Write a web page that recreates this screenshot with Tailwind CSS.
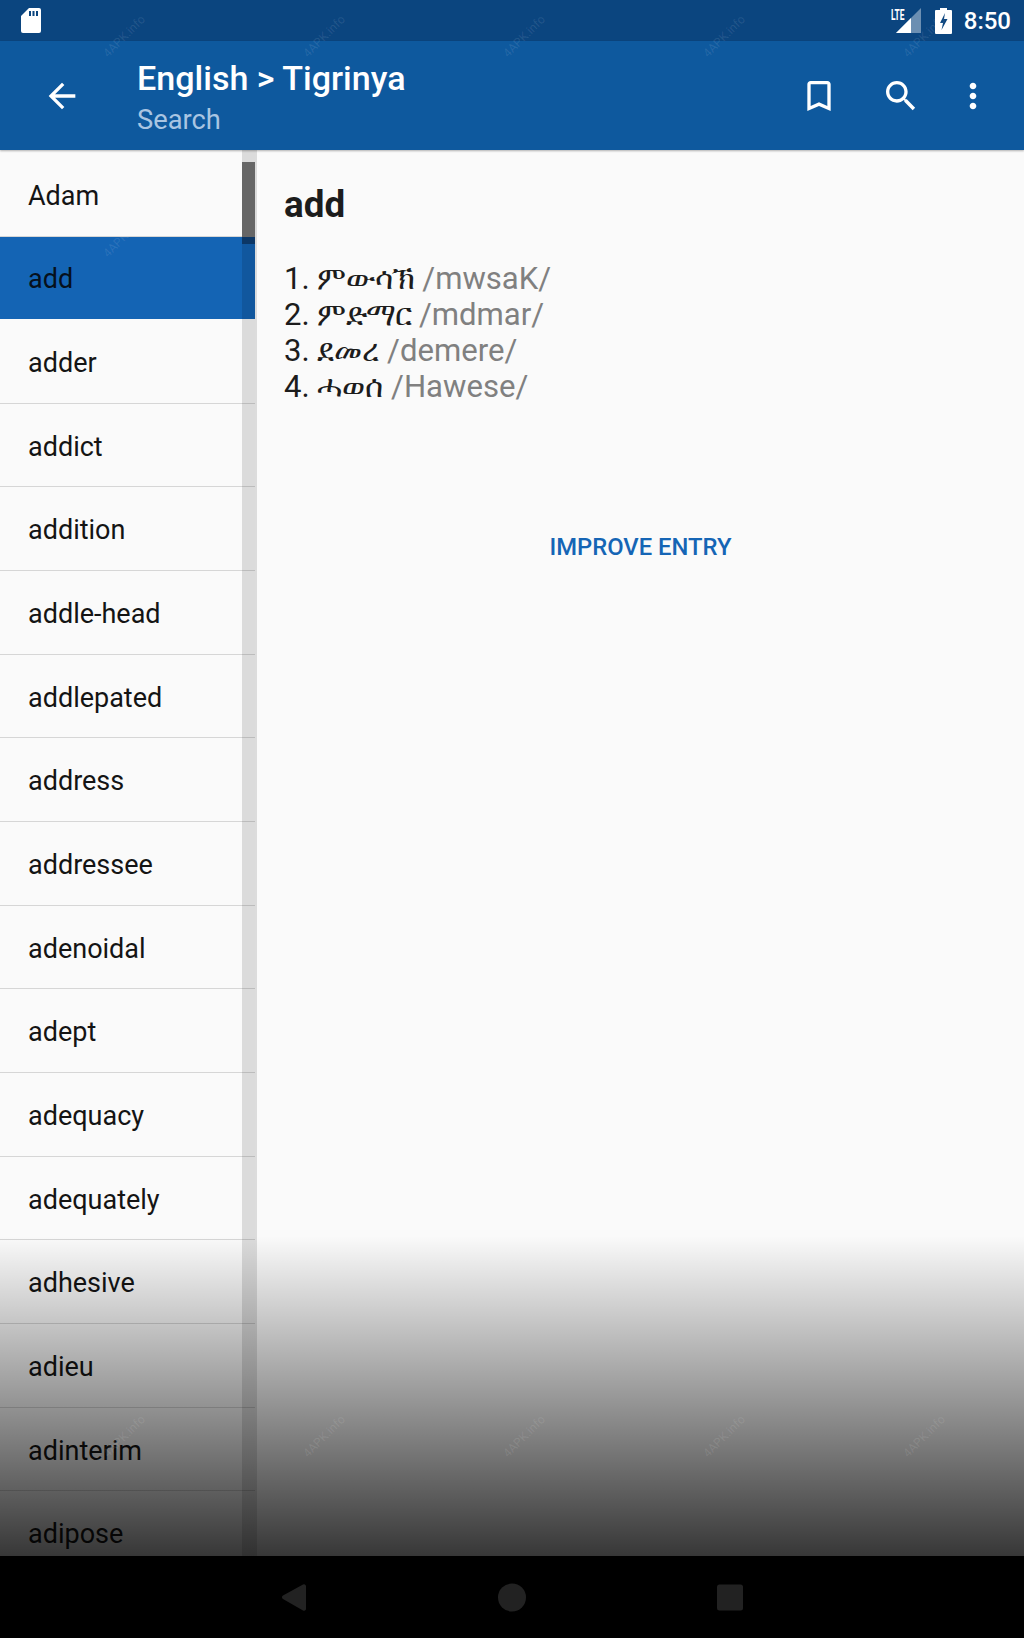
<!DOCTYPE html>
<html>
<head>
<meta charset="utf-8">
<script src="https://cdn.jsdelivr.net/npm/@tailwindcss/browser@4"></script>
</head>
<body class="m-0">
<div class="relative w-[1024px] h-[1638px] overflow-hidden flex flex-col bg-[#fafafa] font-['Roboto',sans-serif]">
  <!-- status bar -->
  <div class="h-[41px] shrink-0 bg-[#0b457f] flex items-center text-white">
    <svg class="ml-[21px] w-[20px] h-[25px]" viewBox="0 0 20 25"><path fill="#fff" d="M8 0H18a2 2 0 0 1 2 2V23a2 2 0 0 1-2 2H2a2 2 0 0 1-2-2V8z"/><path fill="#0b457f" d="M8 3h2v5H8zM11.500 3h2v5h-2zM15 3h2v5h-2z"/></svg>
    <div class="ml-auto relative w-[29px] h-[25px] mr-[10px]">
      <svg class="absolute left-0 top-0 w-[25px] h-[25px]" viewBox="0 0 25 25"><path fill="#fff" fill-opacity=".4" d="M25 0V25H0z"/><path fill="#fff" d="M15 10V25H0z"/></svg>
      <span class="absolute left-[-5px] top-[-1px] text-[14px] leading-[16px] font-bold text-white scale-x-[.6] origin-left">LTE</span>
    </div>
    <svg class="w-[17px] h-[26px]" viewBox="0 0 17 26"><path fill="#fff" d="M5 0h7v2h4a1 1 0 0 1 1 1V25a1 1 0 0 1-1 1H1a1 1 0 0 1-1-1V3a1 1 0 0 1 1-1h4z"/><path fill="#0b457f" d="M10 5 5 15h3l-1.500 7 6-11H9z"/></svg>
    <span class="ml-[12px] mr-[13px] text-[24px] leading-none font-medium">8:50</span>
  </div>
  <!-- app bar -->
  <header class="relative z-10 h-[109px] shrink-0 bg-[#0e599e] shadow-[0_1px_2px_rgba(0,0,0,0.3)] flex items-center text-white">
    <svg class="ml-[42px] w-[40px] h-[40px]" viewBox="0 0 24 24" fill="#fff"><path d="M20 11H7.830l5.590-5.590L12 4l-8 8 8 8 1.410-1.410L7.830 13H20v-2z"/></svg>
    <div class="ml-[55px] flex flex-col pt-[3px]">
      <div class="text-[34.100px] leading-[42px] font-medium">English &gt; Tigrinya</div>
      <div class="mt-[3px] text-[27.300px] leading-[36px] text-[#a9c5e2]">Search</div>
    </div>
    <svg class="ml-auto w-[40px] h-[40px]" viewBox="0 0 24 24" fill="#fff"><path d="M17 3H7c-1.100 0-1.990.9-1.990 2L5 21l7-3 7 3V5c0-1.100-.9-2-2-2zm0 15l-5-2.180L7 18V5h10v13z"/></svg>
    <svg class="ml-[42px] w-[40px] h-[40px]" viewBox="0 0 24 24" fill="#fff"><path d="M15.500 14h-.79l-.28-.27C15.410 12.590 16 11.110 16 9.500 16 5.910 13.090 3 9.500 3S3 5.910 3 9.500 5.910 16 9.500 16c1.610 0 3.090-.59 4.230-1.570l.27.28v.79l5 4.990L20.490 19l-4.990-5zm-6 0C7.010 14 5 11.990 5 9.500S7.010 5 9.500 5 14 7.010 14 9.500 11.990 14 9.500 14z"/></svg>
    <svg class="ml-[32px] mr-[31px] w-[40px] h-[40px]" viewBox="0 0 24 24" fill="#fff"><path d="M12 8c1.100 0 2-.9 2-2s-.9-2-2-2-2 .9-2 2 .9 2 2 2zm0 2c-1.100 0-2 .9-2 2s.9 2 2 2 2-.9 2-2-.9-2-2-2zm0 6c-1.100 0-2 .9-2 2s.9 2 2 2 2-.9 2-2-.9-2-2-2z"/></svg>
  </header>
  <!-- body -->
  <main class="flex-1 min-h-0 flex overflow-hidden">
    <aside class="relative w-[257px] shrink-0 overflow-hidden text-[27px] text-[#141414]">
      <div class="w-[255px] flex flex-col pt-[1px]">
        <div class="h-[86px] flex items-center pl-[28px] pt-[5px] border-b border-[#d6d6d6]">Adam</div>
        <div class="h-[82px] flex items-center pl-[28px] pt-[3px] bg-[#1464b4] text-[#06101c]">add</div>
        <div class="mt-[1px] h-[83.670px] flex items-center pl-[28px] pt-[4px] border-b border-[#d6d6d6]">adder</div>
        <div class="h-[83.670px] flex items-center pl-[28px] pt-[4px] border-b border-[#d6d6d6]">addict</div>
        <div class="h-[83.670px] flex items-center pl-[28px] pt-[4px] border-b border-[#d6d6d6]">addition</div>
        <div class="h-[83.670px] flex items-center pl-[28px] pt-[4px] border-b border-[#d6d6d6]">addle-head</div>
        <div class="h-[83.670px] flex items-center pl-[28px] pt-[4px] border-b border-[#d6d6d6]">addlepated</div>
        <div class="h-[83.670px] flex items-center pl-[28px] pt-[4px] border-b border-[#d6d6d6]">address</div>
        <div class="h-[83.670px] flex items-center pl-[28px] pt-[4px] border-b border-[#d6d6d6]">addressee</div>
        <div class="h-[83.670px] flex items-center pl-[28px] pt-[4px] border-b border-[#d6d6d6]">adenoidal</div>
        <div class="h-[83.670px] flex items-center pl-[28px] pt-[4px] border-b border-[#d6d6d6]">adept</div>
        <div class="h-[83.670px] flex items-center pl-[28px] pt-[4px] border-b border-[#d6d6d6]">adequacy</div>
        <div class="h-[83.670px] flex items-center pl-[28px] pt-[4px] border-b border-[#d6d6d6]">adequately</div>
        <div class="h-[83.670px] flex items-center pl-[28px] pt-[4px] border-b border-[#d6d6d6]">adhesive</div>
        <div class="h-[83.670px] flex items-center pl-[28px] pt-[4px] border-b border-[#d6d6d6]">adieu</div>
        <div class="h-[83.670px] flex items-center pl-[28px] pt-[4px] border-b border-[#d6d6d6]">adinterim</div>
        <div class="h-[83.670px] flex items-center pl-[28px] pt-[4px] border-b border-[#d6d6d6]">adipose</div>
      </div>
      <!-- scrollbar -->
      <div class="absolute top-0 bottom-0 left-[242px] w-[13px] bg-black/12"></div>
      <div class="absolute top-0 bottom-0 left-[255px] w-[2px] bg-[#dcdcdc]"></div>
      <div class="absolute top-[12px] left-[242px] w-[13px] h-[82px] bg-[#666666]"></div>
      <div class="absolute top-[87px] left-[242px] w-[13px] h-[7px] bg-[#0c3766]"></div>
    </aside>
    <section class="flex-1 flex flex-col">
      <h1 class="mt-[35px] ml-[27px] text-[36.800px] leading-[40px] font-bold text-[#1c1c1c]">add</h1>
      <div class="mt-[36px] ml-[27px] text-[31.100px] leading-[36px] text-[#1c1c1c] font-['Roboto','Noto_Sans',sans-serif]">
        <div>1. <span class="tracking-[-0.7px]">ምውሳኽ</span> <span class="text-[#808080]">/mwsaK/</span></div>
        <div>2. <span class="tracking-[-0.8px]">ምድማር</span> <span class="text-[#808080]">/mdmar/</span></div>
        <div>3. ደመረ <span class="text-[#808080]">/demere/</span></div>
        <div>4. ሓወሰ <span class="text-[#808080]">/Hawese/</span></div>
      </div>
      <div class="mt-[127px] text-center text-[23.800px] leading-[30px] font-medium text-[#1565b5]">IMPROVE ENTRY</div>
    </section>
  </main>
  <!-- nav bar -->
  <nav class="relative z-20 h-[82px] shrink-0 bg-black">
    <svg class="absolute left-0 top-0 w-[1024px] h-[82px]" viewBox="0 0 1024 82" fill="#222222">
      <path d="M306 30 a2 2 0 0 0-3-1.500 L283 39.500 a2 2 0 0 0 0 3.500 L303 54.500 a2 2 0 0 0 3-1.500z"/>
      <circle cx="512" cy="41.500" r="14"/>
      <rect x="717" y="28.500" width="26" height="26" rx="2.500"/>
    </svg>
  </nav>
  <!-- bottom fade over the content -->
  <div class="absolute z-10 left-0 right-0 top-[1236px] h-[320px] bg-gradient-to-b from-black/0 to-black/78 pointer-events-none"></div>
  <!-- screenshot watermark -->
  <svg class="absolute z-30 left-0 top-0 w-[1024px] h-[1638px] pointer-events-none" viewBox="0 0 1024 1638" fill="#fff" font-family="Roboto" font-size="12">
    <g fill-opacity=".1">
      <text transform="translate(108 58) rotate(-45)">4APK.info</text>
      <text transform="translate(308 58) rotate(-45)">4APK.info</text>
      <text transform="translate(508 58) rotate(-45)">4APK.info</text>
      <text transform="translate(708 58) rotate(-45)">4APK.info</text>
      <text transform="translate(908 58) rotate(-45)">4APK.info</text>
      <text transform="translate(108 258) rotate(-45)">4APK.info</text>
      <text transform="translate(108 1458) rotate(-45)">4APK.info</text>
      <text transform="translate(308 1458) rotate(-45)">4APK.info</text>
      <text transform="translate(508 1458) rotate(-45)">4APK.info</text>
      <text transform="translate(708 1458) rotate(-45)">4APK.info</text>
      <text transform="translate(908 1458) rotate(-45)">4APK.info</text>
    </g>
  </svg>
</div>
</body>
</html>
